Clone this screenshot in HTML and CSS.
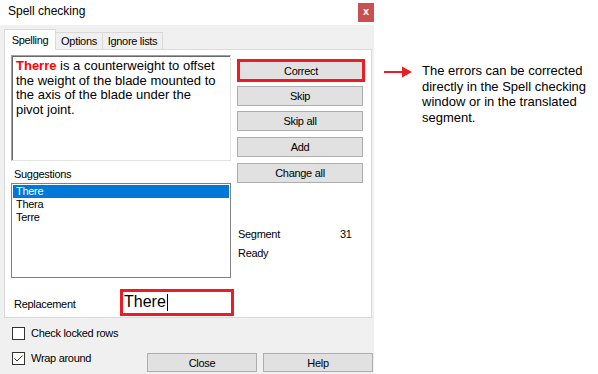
FILE: index.html
```html
<!DOCTYPE html>
<html lang="en">
<head>
    <meta charset="UTF-8">
    <meta name="viewport" content="width=device-width, initial-scale=1.0">
    <title>Spell checking</title>
    <link rel="stylesheet" href="styles.css">
</head>
<body>
    <div class="screen">
        <div class="dialog">
            <div class="titlebar">
                <span class="title">Spell checking</span>
                <span class="close-box">x</span>
            </div>
            <div class="dialog-body">
                <div class="tabs">
                    <div class="tab tab-spelling active">Spelling</div>
                    <div class="tab tab-options">Options</div>
                    <div class="tab tab-ignore">Ignore lists</div>
                </div>
                <div class="tab-panel">
                    <div class="left-col">
                        <div class="source-text"><span class="error-word">Therre</span> is a counterweight to offset the weight of the blade mounted to the axis of the blade under the pivot joint.</div>
                        <div class="field-label">Suggestions</div>
                        <ul class="suggestions">
                            <li class="selected">There</li>
                            <li>Thera</li>
                            <li>Terre</li>
                        </ul>
                    </div>
                    <div class="right-col">
                        <button class="btn btn-correct">Correct</button>
                        <button class="btn btn-skip">Skip</button>
                        <button class="btn btn-skip-all">Skip all</button>
                        <button class="btn btn-add">Add</button>
                        <button class="btn btn-change-all">Change all</button>
                        <div class="status">
                            <div class="status-row"><span>Segment</span><span>31</span></div>
                            <div class="status-row"><span>Ready</span></div>
                        </div>
                    </div>
                    <div class="replacement-row">
                        <span class="replacement-label">Replacement</span>
                        <div class="replacement-input">There<span class="caret"></span></div>
                    </div>
                </div>
                <div class="dialog-footer">
                    <div class="options">
                        <label class="check-row"><span class="checkbox"></span>Check locked rows</label>
                        <label class="check-row"><span class="checkbox">
                            <svg width="11" height="11" viewBox="0 0 11 11"><polyline points="1.5,5.5 4,8 9.5,2.5" fill="none" stroke="#333" stroke-width="1"/></svg>
                        </span>Wrap around</label>
                    </div>
                    <div class="actions">
                        <button class="btn btn-footer">Close</button>
                        <button class="btn btn-footer">Help</button>
                    </div>
                </div>
            </div>
        </div>

        <div class="note">
            <svg class="note-arrow" width="28" height="12" viewBox="0 0 28 12">
                <line x1="0" y1="6" x2="19" y2="6" stroke="#ec1c24" stroke-width="2"/>
                <polygon points="18,0.5 28,6 18,11.5" fill="#ec1c24"/>
            </svg>
            <p class="note-text">The errors can be corrected directly in the Spell checking window or in the translated segment.</p>
        </div>
    </div>
</body>
</html>
```

FILE: styles.css
```css
/* Spell checking dialog + side note */
body { margin: 0; background: #fff; font-family: 'Liberation Sans', Arial, sans-serif; color: #000; }
.screen { display: flex; width: 598px; height: 374px; overflow: hidden; }

.dialog { width: 374px; height: 374px; display: flex; flex-direction: column; background: #f0f0f0; flex-shrink: 0; }
.titlebar { height: 25px; background: #fff; display: flex; justify-content: space-between; align-items: flex-start; }
.title { font-size: 12px; line-height: 15px; padding: 4px 0 0 8px; }
.close-box { width: 16px; height: 19px; margin-top: 3px; background: #c75050; color: #fff; font-size: 11px; font-weight: bold; line-height: 17px; text-align: center; }

.dialog-body { flex: 1; padding: 4px 1px 0 4px; font-size: 11px; letter-spacing: -0.3px; }

.tabs { display: flex; align-items: flex-end; height: 20px; }
.tab { box-sizing: border-box; height: 17px; border: 1px solid #d9d9d9; border-bottom: none; background: #f0f0f0; line-height: 16px; text-align: center; }
.tab + .tab { margin-left: -1px; }
.tab-spelling { width: 52px; }
.tab-options { width: 48px; }
.tab-ignore { width: 61px; }
.tab.active { height: 21px; background: #fff; margin-bottom: -1px; position: relative; z-index: 1; line-height: 20px; }

.tab-panel { box-sizing: border-box; width: 368px; height: 269px; border: 1px solid #d9d9d9; background: #fff; display: grid; grid-template-columns: 220px 128px; grid-template-rows: auto auto; column-gap: 6px; padding: 5px 0 0 6px; }

.left-col { display: flex; flex-direction: column; }
.source-text { box-sizing: border-box; height: 106px; border: 1px solid; border-color: #a0a0a0 #e3e3e3 #e3e3e3 #a0a0a0; box-shadow: inset 1px 1px 0 #696969; padding: 3px 11px 0 4px; font-size: 13px; line-height: 14.5px; letter-spacing: 0; }
.error-word { color: #ff0000; font-weight: bold; }
.field-label { margin-top: 7px; padding-left: 3px; line-height: 13px; }
.suggestions { box-sizing: border-box; height: 95px; margin: 2px 0 0; padding: 1px; list-style: none; border: 1px solid #828282; }
.suggestions li { line-height: 13px; padding-left: 3px; }
.suggestions li.selected { background: #0078d7; color: #fff; }

.right-col { display: flex; flex-direction: column; }
.btn { box-sizing: border-box; width: 126px; height: 20px; padding: 0; border: 1px solid #adadad; background: #e1e1e1; font-family: inherit; font-size: 11px; letter-spacing: -0.3px; color: #000; text-align: center; }
.btn-correct { width: 128px; height: 23px; margin-top: 4px; border: 3px solid #ec1c24; }
.btn-skip { margin-top: 4px; }
.btn-skip-all { margin-top: 5px; }
.btn-add { margin-top: 6px; }
.btn-change-all { margin-top: 6px; }
.status { margin-top: 45px; padding-left: 1px; }
.status-row { display: grid; grid-template-columns: 102px auto; line-height: 13px; }
.status-row + .status-row { margin-top: 6px; }

.replacement-row { grid-column: 1 / -1; display: flex; align-items: center; height: 27px; margin-top: 9px; }
.replacement-label { width: 106px; padding: 4px 0 0 3px; }
.replacement-input { box-sizing: border-box; width: 114px; height: 27px; border: 3px solid #ec1c24; padding-left: 1px; font-size: 16px; line-height: 20px; letter-spacing: 0; display: flex; align-items: center; }
.caret { display: inline-block; width: 1px; height: 17px; background: #000; margin-left: 1px; }

.dialog-footer { display: flex; }
.options { display: flex; flex-direction: column; gap: 12px; padding: 9px 0 0 8px; }
.check-row { display: flex; align-items: center; gap: 6px; line-height: 13px; }
.checkbox { box-sizing: border-box; width: 13px; height: 13px; border: 1px solid #333; background: #fff; display: flex; }
.actions { margin-left: auto; margin-top: 35px; display: flex; gap: 6px; }
.btn-footer { width: 110px; height: 19px; }

.note { display: flex; align-items: flex-start; padding-top: 63px; }
.note-arrow { margin: 3px 0 0 10px; flex-shrink: 0; }
.note-text { margin: 0 0 0 10px; width: 176px; font-size: 13px; line-height: 15.5px; }
```
